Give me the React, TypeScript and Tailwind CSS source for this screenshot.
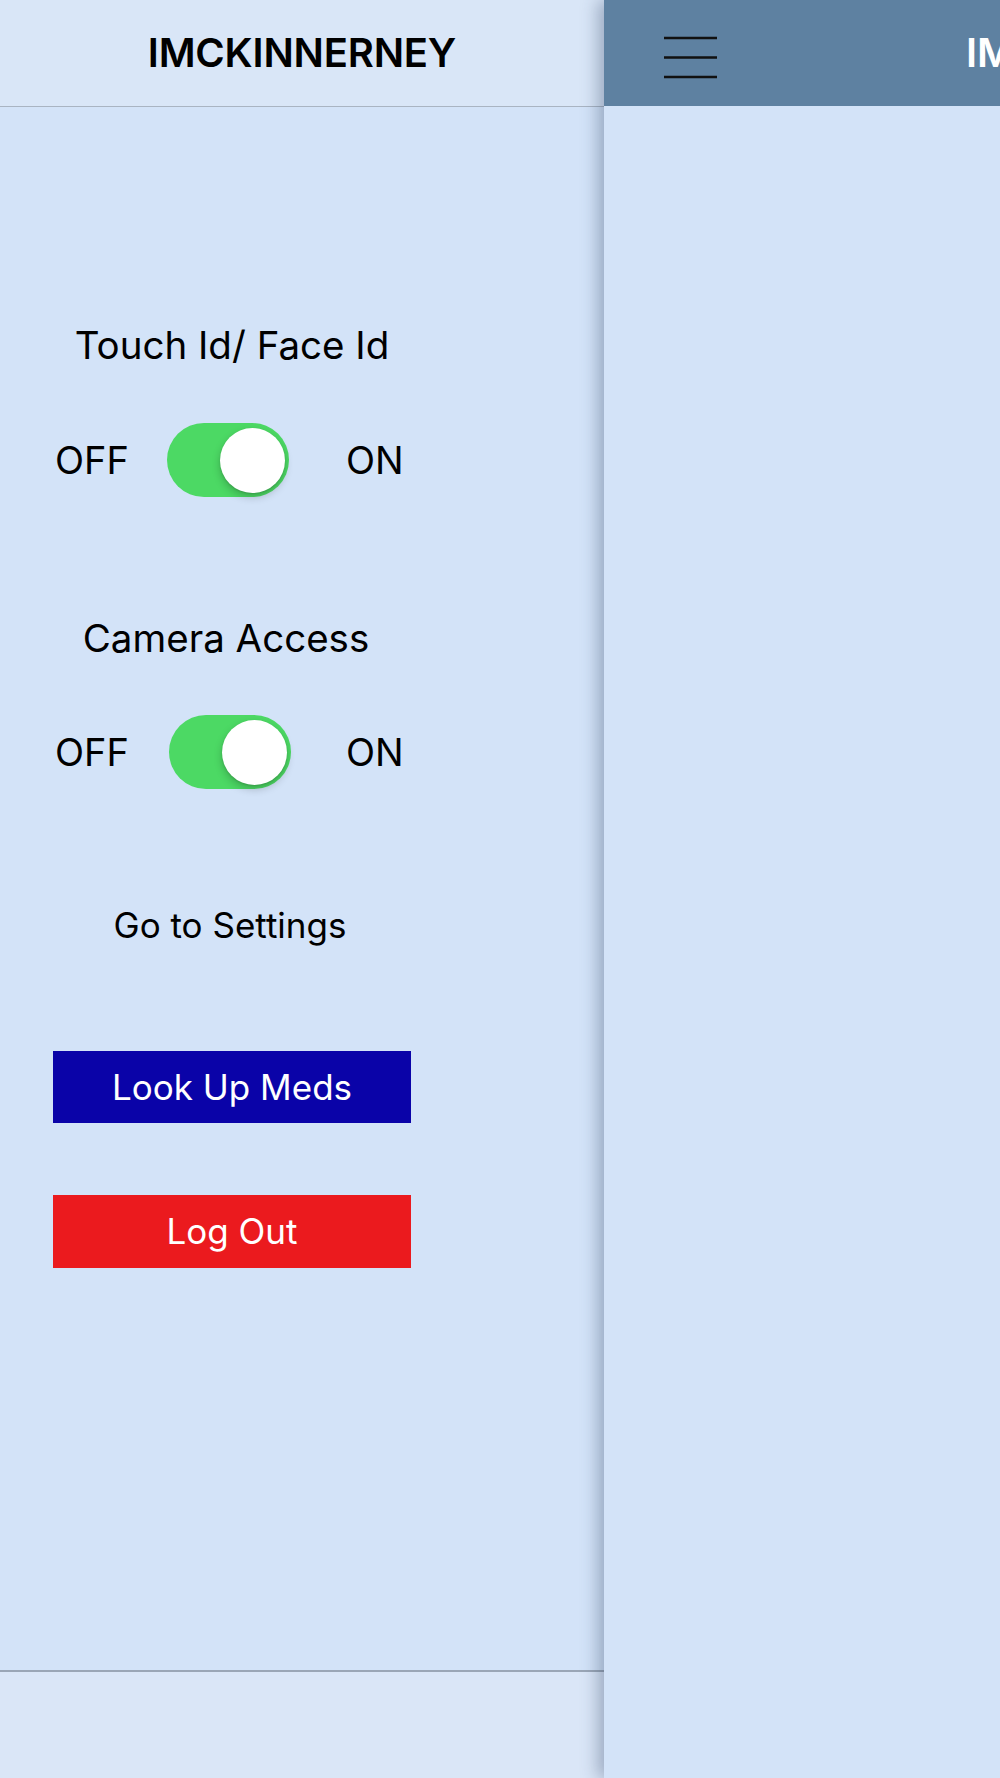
import React from "react";

const Toggle = () => {
  return (
    <div className="relative w-[122px] h-[74px] rounded-full bg-[#4cd964]">
      <div className="absolute right-[4px] top-[4.5px] w-[65px] h-[65px] rounded-full bg-white shadow-[0_4px_8px_rgba(0,0,0,0.22),0_1px_2px_rgba(0,0,0,0.12)]" />
    </div>
  );
};

const ToggleRow = ({ shift }: { shift?: boolean }) => {
  return (
    <div className="flex items-center h-[74px] text-[38px] text-black">
      <span className={shift ? "w-[116px] pl-[2px]" : "w-[114px] pl-[2px]"}>OFF</span>
      <Toggle />
      <span className={shift ? "ml-[55px]" : "ml-[57px]"}>ON</span>
    </div>
  );
};

const App = () => {
  return (
    <div className="flex w-[1000px] h-[1778px] overflow-hidden bg-[#d3e3f8] font-['Inter','Liberation_Sans',sans-serif]">
      <aside className="w-[604px] shrink-0 flex flex-col bg-[#d3e3f8]">
        <header className="h-[107px] shrink-0 flex items-center justify-center bg-[#d9e6f7] border-b border-[#a9b4c2]">
          <h1 className="text-[40px] font-semibold text-black tracking-[-0.2px]">IMCKINNERNEY</h1>
        </header>

        <main className="flex-1 flex flex-col pl-[53px]">
          <div className="w-[358px] flex flex-col">
            <div className="mt-[215px] h-[46px] flex items-center justify-center text-[38.5px] leading-none">
              Touch Id/ Face Id
            </div>
            <div className="mt-[55px]">
              <ToggleRow />
            </div>

            <div className="mt-[118px] h-[46px] flex items-center justify-center text-[38.5px] leading-none pr-[12px]">
              Camera Access
            </div>
            <div className="mt-[54px]">
              <ToggleRow shift />
            </div>

            <div className="mt-[115px] h-[42px] flex items-center justify-center text-[35px] leading-none pr-[4px]">
              Go to Settings
            </div>

            <button className="mt-[105px] h-[72px] w-[358px] bg-[#0a03a8] text-white text-[35px]">
              Look Up Meds
            </button>
            <button className="mt-[72px] h-[73px] w-[358px] bg-[#eb1a1e] text-white text-[35px]">
              Log Out
            </button>
          </div>
        </main>

        <footer className="h-[108px] shrink-0 bg-[#dae6f7] border-t-2 border-[#9aa6b6]" />
      </aside>

      <section className="relative z-10 flex-1 flex flex-col bg-[#d3e3f8] shadow-[-6px_0_16px_rgba(40,60,95,0.35)]">
        <header className="h-[106px] shrink-0 flex items-center bg-[#5e81a1] pl-[60px] overflow-hidden">
          <svg width="53" height="45" viewBox="0 0 53 45" className="shrink-0 mt-[8px]">
            <line x1="0" y1="3" x2="53" y2="3" stroke="#111" strokeWidth="2.5" />
            <line x1="0" y1="22.5" x2="53" y2="22.5" stroke="#111" strokeWidth="2.5" />
            <line x1="0" y1="42" x2="53" y2="42" stroke="#111" strokeWidth="2.5" />
          </svg>
          <span className="ml-[249px] text-[40px] font-semibold text-white whitespace-nowrap">IMCKINNERNEY</span>
        </header>
        <div className="flex-1" />
      </section>
    </div>
  );
};

export default App;
